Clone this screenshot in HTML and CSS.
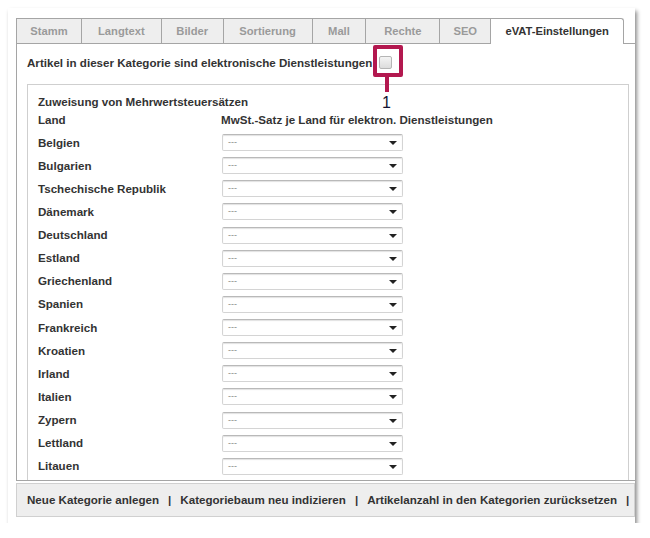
FILE: index.html
```html
<!DOCTYPE html>
<html lang="de">
<head>
<meta charset="utf-8">
<link rel="stylesheet" href="styles.css">
</head>
<body>
<div class="card">
  <div class="tabs">
    <div class="tab">Stamm</div>
    <div class="tab">Langtext</div>
    <div class="tab">Bilder</div>
    <div class="tab">Sortierung</div>
    <div class="tab">Mall</div>
    <div class="tab">Rechte</div>
    <div class="tab">SEO</div>
    <div class="tab active">eVAT-Einstellungen</div>
  </div>
  <div class="panel">
    <div class="check-row">
      <span>Artikel in dieser Kategorie sind elektronische Dienstleistungen</span>
      <span class="checkbox"></span>
      <div class="callout">
        <div class="callout-box"></div>
        <div class="callout-line"></div>
        <div class="callout-num">1</div>
      </div>
    </div>
    <div class="fieldset">
      <div class="legend">Zuweisung von Mehrwertsteuersätzen</div>
      <div class="grid">
        <div class="cell">Land</div><div class="cell">MwSt.-Satz je Land für elektron. Dienstleistungen</div>
        <div class="cell">Belgien</div><div class="cell"><div class="sel">---</div></div>
        <div class="cell">Bulgarien</div><div class="cell"><div class="sel">---</div></div>
        <div class="cell">Tschechische Republik</div><div class="cell"><div class="sel">---</div></div>
        <div class="cell">Dänemark</div><div class="cell"><div class="sel">---</div></div>
        <div class="cell">Deutschland</div><div class="cell"><div class="sel">---</div></div>
        <div class="cell">Estland</div><div class="cell"><div class="sel">---</div></div>
        <div class="cell">Griechenland</div><div class="cell"><div class="sel">---</div></div>
        <div class="cell">Spanien</div><div class="cell"><div class="sel">---</div></div>
        <div class="cell">Frankreich</div><div class="cell"><div class="sel">---</div></div>
        <div class="cell">Kroatien</div><div class="cell"><div class="sel">---</div></div>
        <div class="cell">Irland</div><div class="cell"><div class="sel">---</div></div>
        <div class="cell">Italien</div><div class="cell"><div class="sel">---</div></div>
        <div class="cell">Zypern</div><div class="cell"><div class="sel">---</div></div>
        <div class="cell">Lettland</div><div class="cell"><div class="sel">---</div></div>
        <div class="cell">Litauen</div><div class="cell"><div class="sel">---</div></div>
      </div>
    </div>
  </div>
  <div class="footer"><span>Neue Kategorie anlegen</span><span class="sep">|</span><span>Kategoriebaum neu indizieren</span><span class="sep">|</span><span>Artikelanzahl in den Kategorien zurücksetzen</span><span class="sep">|</span></div>
</div>
</body>
</html>
```

FILE: styles.css
```css
html, body {
  margin: 0;
  padding: 0;
  background: #ffffff;
}
body {
  font-family: "Liberation Sans", Arial, sans-serif;
  font-size: 11.6px;
  font-weight: bold;
  color: #333333;
}
.card {
  margin: 8px 0 0 8px;
  width: 627px;
  height: 515px;
  box-sizing: border-box;
  padding: 10px 0 0 8px;
  background: #ffffff;
  box-shadow: 2px 3px 4px rgba(0, 0, 0, 0.45);
}
.tabs {
  display: flex;
  height: 25px;
  width: 608px;
}
.tab {
  box-sizing: border-box;
  height: 25px;
  line-height: 24px;
  padding: 0;
  background: #eeeeee;
  color: #9a9a9a;
  border: 1px solid #a5a5a5;
  border-bottom: none;
  border-right: none;
  text-align: center;
  white-space: nowrap;
  font-size: 11.2px;
}
.tab:nth-child(1) { width: 65px; }
.tab:nth-child(2) { width: 80px; }
.tab:nth-child(3) { width: 62px; }
.tab:nth-child(4) { width: 89px; }
.tab:nth-child(5) { width: 54px; }
.tab:nth-child(6) { width: 74px; }
.tab:nth-child(7) { width: 51px; }
.tab.active {
  width: 134px;
  background: #ffffff;
  color: #333333;
  border-right: 1px solid #a5a5a5;
  border-top-right-radius: 3px;
  height: 26px;
  position: relative;
  z-index: 1;
}
.panel {
  height: 438px;
  box-sizing: border-box;
  border-top: 1px solid #a5a5a5;
  border-left: 1px solid #a5a5a5;
  border-bottom: 1px solid #a5a5a5;
  padding: 0 6px 0 10px;
  display: flex;
  flex-direction: column;
  overflow: hidden;
}
.check-row {
  position: relative;
  display: flex;
  align-items: center;
  height: 36px;
}
.checkbox {
  display: inline-block;
  width: 11px;
  height: 11px;
  margin-left: 7px;
  border: 1px solid #b5b5b5;
  border-radius: 2px;
  background: linear-gradient(#f4f4f4, #dcdcdc);
}
.callout {
  position: absolute;
  left: 346px;
  top: 1px;
  width: 30px;
  height: 66px;
}
.callout-box {
  box-sizing: border-box;
  width: 30px;
  height: 32px;
  border: 4px solid #b3184f;
  border-radius: 2px;
}
.callout-line {
  width: 4px;
  height: 15px;
  margin-left: 12px;
  background: #b3184f;
}
.callout-num {
  font-family: "Liberation Sans", Arial, sans-serif;
  font-weight: normal;
  font-size: 16px;
  line-height: 16px;
  color: #141433;
  margin-top: 3px;
  margin-left: 9px;
}
.fieldset {
  flex: 1;
  margin-top: 4px;
  border: 1px solid #cfcfcf;
  border-bottom: none;
  padding: 10px 0 0 10px;
}
.legend {
  line-height: 14px;
}
.grid {
  display: grid;
  grid-template-columns: 183px 1fr;
  grid-template-rows: 22px;
  grid-auto-rows: 23.14px;
  align-items: center;
}
.cell {
  line-height: 14px;
}
.sel {
  box-sizing: border-box;
  width: 181px;
  height: 17px;
  margin-left: 1px;
  border: 1px solid #d4d4d4;
  border-top-color: #b9b9b9;
  border-radius: 2px;
  box-shadow: inset 0 1px 1px rgba(0, 0, 0, 0.12);
  background: #ffffff;
  color: #8a8a8a;
  font-size: 9px;
  font-weight: normal;
  line-height: 15px;
  padding-left: 5px;
  position: relative;
}
.sel::after {
  content: "";
  position: absolute;
  right: 5px;
  top: 6px;
  border-left: 4px solid transparent;
  border-right: 4px solid transparent;
  border-top: 4px solid #222222;
}
.footer {
  box-sizing: border-box;
  width: 619px;
  height: 34px;
  margin-top: 2px;
  border: 1px solid #d0d0d0;
  background: #eeeeee;
  line-height: 32px;
  padding-left: 10px;
  white-space: nowrap;
  overflow: hidden;
}
.sep {
  padding: 0 9px;
}
```
